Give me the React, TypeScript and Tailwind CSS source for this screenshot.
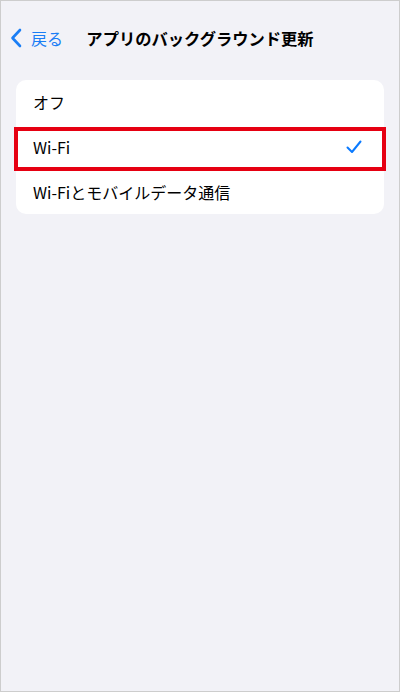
import React from "react";

const options = [
	{ label: "オフ", checked: false, highlight: false },
	{ label: "Wi-Fi", checked: true, highlight: true },
	{ label: "Wi-Fiとモバイルデータ通信", checked: false, highlight: false },
];

export default function App() {
	return (
		<div
			className="h-[692px] w-[400px] overflow-hidden border border-[#cdcdcd] bg-[#f2f2f7] text-black"
			style={{ fontFamily: '"Noto Sans CJK JP", "Noto Sans", sans-serif' }}
		>
			{/* Nav bar */}
			<div className="relative mt-[17px] flex h-[40px] items-center">
				<div className="flex items-center pl-[9px] text-[#1a7ef5]">
					<svg width="12" height="20" viewBox="0 0 12 20" fill="none">
						<path
							d="M10 2 L2.5 10 L10 18"
							stroke="currentColor"
							strokeWidth="2.6"
							strokeLinecap="round"
							strokeLinejoin="round"
						/>
					</svg>
					<span className="ml-[9px] text-[16px] leading-none">戻る</span>
				</div>
				<div className="absolute inset-x-0 text-center text-[16.3px] font-bold leading-none">
					アプリのバックグラウンド更新
				</div>
			</div>

			{/* Options card */}
			<div className="mx-[15px] mt-[22px] rounded-[10px] bg-white">
				{options.map((o, i) => (
					<div
						key={o.label}
						className={`relative flex items-center pl-[17px] pr-[22px] text-[16px] ${
							i === 0 ? "h-[44px]" : "h-[45px]"
						}`}
					>
						<span className="flex-1 leading-none">{o.label}</span>
						{o.checked && (
							<svg width="16" height="14" viewBox="0 0 16 14" fill="none">
								<path
									d="M1.5 7.5 L6 12 L14.5 1.5"
									stroke="#0a7aff"
									strokeWidth="2"
									strokeLinecap="round"
									strokeLinejoin="round"
								/>
							</svg>
						)}
						{o.highlight && (
							<div className="pointer-events-none absolute -left-[2px] -right-[2px] top-[3px] -bottom-[2px] border-[4px] border-[#e60012]" />
						)}
					</div>
				))}
			</div>
		</div>
	);
}
